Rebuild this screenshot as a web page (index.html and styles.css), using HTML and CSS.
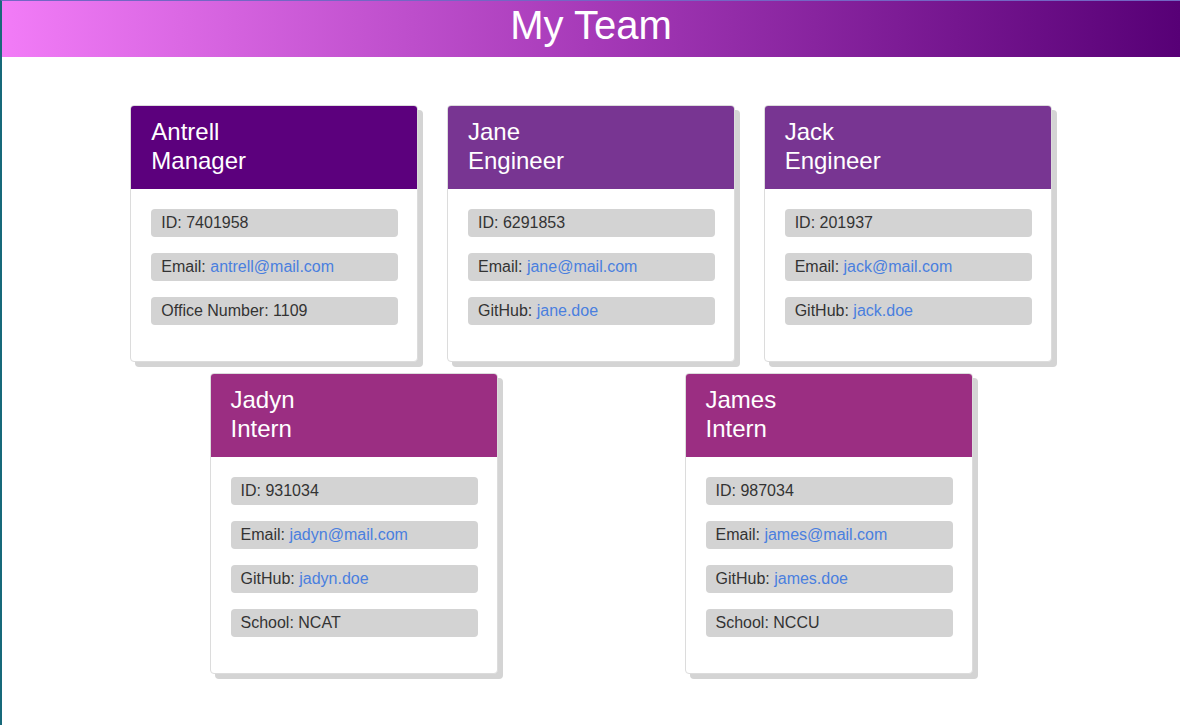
FILE: index.html
```html
<!DOCTYPE html>
<html lang="en">
<head>
<meta charset="utf-8">
<title>My Team</title>
<link rel="stylesheet" href="styles.css">
</head>
<body>
<div class="frame">
  <header class="banner"><h1 class="banner-title">My Team</h1></header>
  <main class="team">
    <section class="card">
      <div class="card-head manager"><h2 class="card-name">Antrell<br>Manager</h2></div>
      <ul class="card-body">
        <li class="info">ID: 7401958</li>
        <li class="info">Email: <a class="link" href="#">antrell@mail.com</a></li>
        <li class="info">Office Number: 1109</li>
      </ul>
    </section>
    <section class="card">
      <div class="card-head engineer"><h2 class="card-name">Jane<br>Engineer</h2></div>
      <ul class="card-body">
        <li class="info">ID: 6291853</li>
        <li class="info">Email: <a class="link" href="#">jane@mail.com</a></li>
        <li class="info">GitHub: <a class="link" href="#">jane.doe</a></li>
      </ul>
    </section>
    <section class="card">
      <div class="card-head engineer"><h2 class="card-name">Jack<br>Engineer</h2></div>
      <ul class="card-body">
        <li class="info">ID: 201937</li>
        <li class="info">Email: <a class="link" href="#">jack@mail.com</a></li>
        <li class="info">GitHub: <a class="link" href="#">jack.doe</a></li>
      </ul>
    </section>
    <section class="card">
      <div class="card-head intern"><h2 class="card-name">Jadyn<br>Intern</h2></div>
      <ul class="card-body">
        <li class="info">ID: 931034</li>
        <li class="info">Email: <a class="link" href="#">jadyn@mail.com</a></li>
        <li class="info">GitHub: <a class="link" href="#">jadyn.doe</a></li>
        <li class="info">School: NCAT</li>
      </ul>
    </section>
    <section class="card">
      <div class="card-head intern"><h2 class="card-name">James<br>Intern</h2></div>
      <ul class="card-body">
        <li class="info">ID: 987034</li>
        <li class="info">Email: <a class="link" href="#">james@mail.com</a></li>
        <li class="info">GitHub: <a class="link" href="#">james.doe</a></li>
        <li class="info">School: NCCU</li>
      </ul>
    </section>
  </main>
</div>
</body>
</html>
```

FILE: styles.css
```css
html, body {
  margin: 0;
  padding: 0;
  background: #ffffff;
}

body {
  font-family: "Liberation Sans", Arial, sans-serif;
  color: #333333;
}

.frame {
  min-height: 725px;
  box-sizing: border-box;
  border-left: 2px solid #17697a;
  border-top: 1px solid #7466c4;
}

.banner {
  height: 56px;
  background: linear-gradient(to right, #f27cf7 0%, #a63ab8 50%, #570076 100%);
  display: flex;
  align-items: center;
  justify-content: center;
}

.banner-title {
  margin: 0;
  font-size: 40px;
  font-weight: normal;
  color: #ffffff;
  line-height: 1;
  padding-bottom: 8px;
}

.team {
  width: 950px;
  margin: 48px auto 0;
  display: flex;
  flex-wrap: wrap;
  justify-content: space-around;
  row-gap: 11px;
}

.card {
  width: 288px;
  box-sizing: border-box;
  border: 1px solid #dcdcdc;
  border-radius: 4px;
  background: #ffffff;
  box-shadow: 5px 5px 0 #d4d4d4;
}

.card-head {
  padding: 11px 20px 14px;
  border-radius: 3px 3px 0 0;
}

.manager { background: #5c007d; }
.engineer { background: #783592; }
.intern { background: #9b2e82; }

.card-name {
  margin: 0;
  font-size: 24px;
  font-weight: normal;
  line-height: 29px;
  color: #ffffff;
}

.card-body {
  list-style: none;
  margin: 0;
  padding: 20px 19px 20px 20px;
}

.info {
  height: 28px;
  line-height: 28px;
  padding: 0 10px;
  margin-bottom: 16px;
  background: #d3d3d3;
  border-radius: 4px;
  font-size: 16px;
  color: #333333;
}

.link {
  color: #4a7fdf;
  text-decoration: none;
}
```
